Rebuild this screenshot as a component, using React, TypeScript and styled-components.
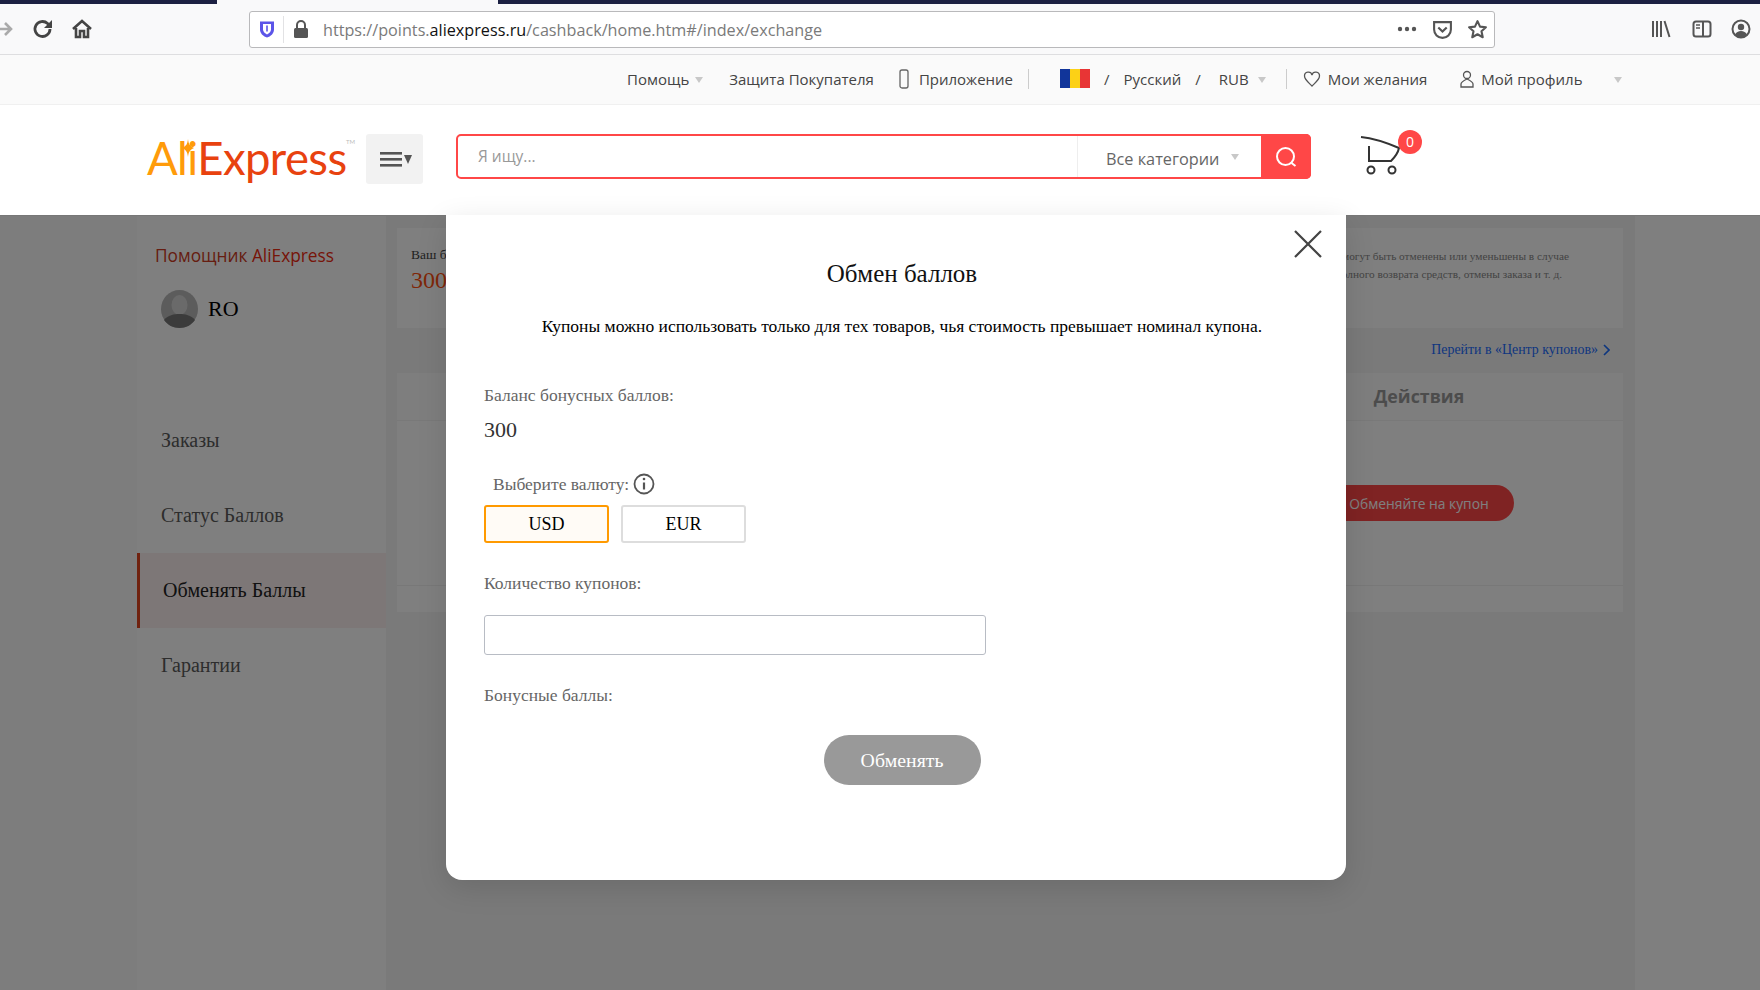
import React from "react";
import styled, { createGlobalStyle } from "styled-components";

const Global = createGlobalStyle`
  html, body { margin: 0; padding: 0; background: #fff; overflow: hidden; }
  * { box-sizing: border-box; }
`;
const sans = `"Open Sans", "Noto Sans", sans-serif`;
const serif = `"Liberation Serif", "Times New Roman", serif`;

const Screen = styled.div`
  position: relative; width: 1760px; height: 990px; overflow: hidden;
  display: flex; flex-direction: column; font-family: ${serif};
`;
const TabStrip = styled.div`
  height: 4px; flex: none; display: flex; background: #1c2042;
`;
const ActiveTab = styled.div`
  width: 281px; margin-left: 217px; background: #f9f9fa;
`;
const Toolbar = styled.div`
  height: 51px; flex: none; background: #f9f9fa; border-bottom: 1px solid #dedee0;
  display: flex; align-items: center; position: relative;
`;
const ToolIcon = styled.svg<{ $ml: number }>`
  flex: none; margin-left: ${p => p.$ml}px; display: block;
`;
const UrlBar = styled.div`
  width: 1246px; height: 37px; margin-left: 156px; padding-right: 6px;
  background: #fff; border: 1px solid #b9b9bb; border-radius: 3px;
  display: flex; align-items: center; flex: none;
`;
const UrlDivider = styled.div`
  width: 1px; height: 27px; background: #e2e2e4; margin-left: 8px;
`;
const UrlText = styled.div`
  font-family: ${sans}; font-size: 16.2px; color: #7a7a7a; margin-left: 14px; flex: 1;
  padding-top: 2px; white-space: nowrap;
  b { font-weight: 400; color: #111; }
`;
const TopNav = styled.div`
  height: 50px; flex: none; background: #fafafa; border-bottom: 1px solid #f0f0f0;
  display: flex; align-items: center; padding: 0 0 2px 627px;
  font-family: ${sans}; font-size: 15px; color: #444;
`;
const NavText = styled.span<{ $ml?: number }>`
  margin-left: ${p => p.$ml ?? 0}px; white-space: nowrap; flex: none;
`;
const Caret = styled.span<{ $ml: number; $up?: number }>`
  flex: none; margin-left: ${p => p.$ml}px; width: 0; height: 0; margin-top: ${p => 2 - (p.$up ?? 0)}px;
  border-left: 4.5px solid transparent; border-right: 4.5px solid transparent;
  border-top: 6px solid #c8c8c8;
`;
const NavDivider = styled.span<{ $ml: number }>`
  flex: none; margin-left: ${p => p.$ml}px; width: 1px; height: 20px; background: #ccc;
`;
const Flag = styled.div`
  flex: none; margin-left: 31px; width: 30px; height: 19px; display: flex;
`;
const FlagStripe = styled.span<{ $color: string }>`
  flex: 1; background: ${p => p.$color};
`;
const Header = styled.div`
  height: 110px; flex: none; background: #fff; display: flex; align-items: center;
  padding-left: 147px; position: relative;
`;
const Logo = styled.div`
  position: relative; width: 203px; height: 60px; flex: none;
  font-family: "Lato", ${sans}; font-size: 45.5px; line-height: 60px; letter-spacing: -0.6px;
  color: #e8420f; white-space: nowrap; font-weight: 400; margin-bottom: 4px;
  em { font-style: normal; color: #ff9b0a; }
  sup { position: absolute; left: 199px; top: 11px; font-size: 6px; line-height: 1; color: #bbb; letter-spacing: 0; }
`;
const LogoStar = styled.svg`
  position: absolute; left: 34px; top: 11px;
`;
const MenuBtn = styled.div`
  width: 57px; height: 50px; margin-left: 16px; margin-bottom: 2px; flex: none; background: #f2f2f2; border-radius: 3px;
  display: flex; align-items: center; justify-content: center;
`;
const SearchBox = styled.div`
  width: 855px; height: 45px; margin-left: 33px; margin-bottom: 7px; flex: none; border: 2px solid #ff4747; border-radius: 5px;
  display: flex; align-items: stretch; background: #fff; position: relative;
`;
const SearchInput = styled.div`
  width: 620px; font-family: ${sans}; font-size: 15.5px; color: #999;
  padding: 0 0 2px 20px; display: flex; align-items: center; border-right: 1px solid #eee;
`;
const CategoryCell = styled.div`
  width: 183px; display: flex; align-items: center; padding-left: 28px; padding-top: 4px;
  font-family: ${sans}; font-size: 16.3px; color: #666;
`;
const SearchBtn = styled.div`
  flex: 1; margin: -2px -2px -2px 0; background: #ff4747; border-radius: 0 5px 5px 0;
  display: flex; align-items: center; justify-content: center;
`;
const CartWrap = styled.div`
  position: relative; width: 44px; height: 42px; margin-left: 49px; margin-bottom: 9px; flex: none;
`;
const CartBadge = styled.div`
  position: absolute; left: 38px; top: -5px; width: 24px; height: 24px; border-radius: 50%;
  background: #ff4747; color: #fff; font-family: ${sans}; font-size: 14px;
  display: flex; align-items: center; justify-content: center;
`;
const Body = styled.div`
  flex: 1; display: flex; background: #fff; min-height: 0; border-top: 1px solid #eee;
`;
const Gutter = styled.div`
  width: 137px; flex: none; background: #fafafa;
`;
const Container = styled.div`
  width: 1498px; flex: none; background: #f5f5f5; display: flex;
`;
const Sidebar = styled.aside`
  width: 249px; flex: none; background: #fff; display: flex; flex-direction: column;
`;
const HelperTitle = styled.div`
  margin: 28px 0 0 18px; font-family: ${sans}; font-size: 17.3px; color: #cc3a22; white-space: nowrap;
  height: 24px; line-height: 24px;
  span { color: #ee2a10; }
`;
const UserRow = styled.div`
  display: flex; align-items: center; gap: 10px; margin: 22px 0 0 24px; height: 38px;
  font-size: 22px; color: #000;
`;
const MenuList = styled.div`
  margin-top: 75px; display: flex; flex-direction: column;
`;
const MenuItem = styled.div<{ $active?: boolean }>`
  height: 75px; display: flex; align-items: center; font-size: 20px;
  padding-left: ${p => (p.$active ? 23 : 24)}px;
  color: ${p => (p.$active ? "#222" : "#5a5a5a")};
  background: ${p => (p.$active ? "#fbeeee" : "transparent")};
  border-left: ${p => (p.$active ? "3px solid #e0441f" : "none")};
`;
const Content = styled.main`
  width: 1226px; margin-left: 11px; flex: none; display: flex; flex-direction: column;
`;
const InfoPanel = styled.section`
  margin-top: 12px; height: 100px; background: #fff; padding: 17px 0 0 14px; display: flex; justify-content: space-between;
`;
const Balance = styled.div`
  font-size: 13.5px; color: #444; line-height: 20px;
`;
const BalanceValue = styled.div`
  font-size: 24px; color: #ff4f10; line-height: 28px; margin-top: 1px;
`;
const Notice = styled.div`
  display: flex; flex-direction: column; align-items: flex-end; padding-right: 54px;
  font-size: 11.3px; color: #888; line-height: 18px; padding-top: 2px;
`;
const NoticeLine = styled.span<{ $inset?: number }>`
  margin-right: ${p => p.$inset ?? 0}px; white-space: nowrap;
`;
const LinkRow = styled.div`
  height: 45px; display: flex; align-items: center; justify-content: flex-end; padding: 0 13px 2px 0; gap: 5px;
  font-size: 13.9px; color: #1a6cff;
`;
const TablePanel = styled.section`
  height: 239px; background: #fff; display: flex; flex-direction: column;
`;
const TableHead = styled.div`
  height: 48px; flex: none; border-bottom: 1px solid #f3f3f3; background: #fdfdfd; display: flex; align-items: center; justify-content: flex-end; padding-bottom: 2px;
`;
const ActionCol = styled.div`
  width: 408px; text-align: center; font-family: ${sans}; font-size: 17.8px; font-weight: 700; color: #999;
`;
const TableRow = styled.div`
  height: 165px; flex: none; border-bottom: 1px solid #f0f0f0; display: flex; justify-content: flex-end; align-items: center;
`;
const ActionCell = styled.div`
  width: 408px; display: flex; justify-content: center;
`;
const RedBtn = styled.div`
  width: 190px; height: 36px; border-radius: 18px; background: #ff4747; color: #fff;
  font-family: ${sans}; font-size: 13.8px; display: flex; align-items: center; justify-content: center;
`;
const Overlay = styled.div`
  position: absolute; left: 0; right: 0; top: 215px; bottom: 0; background: rgba(0,0,0,.5);
`;
const Modal = styled.div`
  position: absolute; left: 446px; top: 215px; width: 900px; height: 665px; background: #fff;
  border-radius: 0 0 16px 16px; box-shadow: 0 8px 30px rgba(0,0,0,.12);
  padding: 0 26px 0 38px; display: flex; flex-direction: column;
`;
const CloseBtn = styled.svg`
  position: absolute; left: 848px; top: 15px;
`;
const Title = styled.h2`
  margin: 43px 0 0; font-size: 25px; font-weight: 400; color: #111; text-align: center; line-height: 32px;
`;
const Lead = styled.p`
  margin: 24px 0 0; font-size: 17.5px; color: #000; text-align: center; line-height: 24px;
`;
const FieldLabel = styled.div<{ $mt: number; $ml?: number }>`
  margin: ${p => p.$mt}px 0 0 ${p => p.$ml ?? 0}px; font-size: 17.5px; color: #666; line-height: 24px;
  display: flex; align-items: center; gap: 4px;
`;
const Amount = styled.div`
  margin-top: 9px; font-size: 22px; color: #333; line-height: 28px;
`;
const CurrencyRow = styled.div`
  display: flex; gap: 12px; margin-top: 9px;
`;
const CurrencyBtn = styled.div<{ $active?: boolean }>`
  width: 125px; height: 38px; border-radius: 3px;
  border: 2px solid ${p => (p.$active ? "#ff9a00" : "#ddd")};
  background: ${p => (p.$active ? "#fffbf6" : "#fff")};
  display: flex; align-items: center; justify-content: center; font-size: 18px; color: #000;
`;
const CountInput = styled.div`
  width: 502px; height: 40px; margin-top: 20px; border: 1px solid #b8bcc4; border-radius: 3px; background: #fff;
`;
const SubmitRow = styled.div`
  display: flex; justify-content: center; margin-top: 28px;
`;
const Submit = styled.div`
  width: 157px; height: 50px; border-radius: 25px; background: #999; color: #fff;
  display: flex; align-items: center; justify-content: center; font-size: 19.8px;
`;

export default function App() {
  return (
    <>
      <Global />
      <Screen>
        <TabStrip><ActiveTab /></TabStrip>
        <Toolbar>
          <ToolIcon $ml={0} width="13" height="20" viewBox="0 0 13 20" fill="none" stroke="#aaa" strokeWidth="2.600">
            <path d="M-1 10h12M5 4l6 6-6 6" />
          </ToolIcon>
          <ToolIcon $ml={19} width="22" height="22" viewBox="0 0 22 22" fill="none" stroke="#444" strokeWidth="2.800">
            <path d="M18 11a7.500 7.500 0 1 1-2.400-5.500L18 8" /><path d="M20 2v8h-8z" fill="#444" stroke="none" />
          </ToolIcon>
          <ToolIcon $ml={17} width="22" height="22" viewBox="0 0 22 22" fill="none" stroke="#444" strokeWidth="2.600">
            <path d="M2 11 11 3l9 8" /><path d="M5 10v9h4v-6h4v6h4v-9" />
          </ToolIcon>
          <UrlBar>
            <ToolIcon $ml={9} width="16" height="20" viewBox="0 0 16 20">
              <path d="M1 2.500h14v8c0 4-3.500 7-7 8-3.500-1-7-4-7-8z" fill="#5b54e8" />
              <path d="M4 5h8v5.500c0 2-2 4-4 5-2-1-4-3-4-5z" fill="#fff" />
              <path d="M7.200 6.500h1.600v6h-1.600z" fill="#5b54e8" />
            </ToolIcon>
            <UrlDivider />
            <ToolIcon $ml={9} width="16" height="20" viewBox="0 0 16 20">
              <path d="M4 9V6a4 4 0 0 1 8 0v3" fill="none" stroke="#555" strokeWidth="2" /><rect x="1" y="9" width="14" height="10" rx="1.500" fill="#555" />
            </ToolIcon>
            <UrlText>https://points.<b>aliexpress.ru</b>/cashback/home.htm#/index/exchange</UrlText>
            <ToolIcon $ml={0} width="20" height="6" viewBox="0 0 20 6" fill="#555">
              <circle cx="3" cy="3" r="2.200" /><circle cx="10" cy="3" r="2.200" /><circle cx="17" cy="3" r="2.200" />
            </ToolIcon>
            <ToolIcon $ml={15} width="21" height="21" viewBox="0 0 20 20" fill="none" stroke="#555" strokeWidth="2">
              <path d="M2 3h16v7a8 8 0 0 1-16 0z" /><path d="M6 8l4 4 4-4" />
            </ToolIcon>
            <ToolIcon $ml={14} width="21" height="21" viewBox="0 0 20 20" fill="none" stroke="#555" strokeWidth="2" strokeLinejoin="round">
              <path d="M10 2l2.400 5.300 5.600.6-4.200 3.800 1.200 5.700L10 14.500l-5 2.900 1.200-5.700L2 7.900l5.600-.6z" />
            </ToolIcon>
          </UrlBar>
          <ToolIcon $ml={156} width="20" height="20" viewBox="0 0 20 20" stroke="#555" strokeWidth="2" fill="none">
            <path d="M2 2v16M6 2v16M10 2v16M13.500 2l5 16" />
          </ToolIcon>
          <ToolIcon $ml={21} width="20" height="20" viewBox="0 0 20 20" fill="none" stroke="#555" strokeWidth="2">
            <rect x="1.500" y="2.500" width="17" height="15" rx="2.500" /><path d="M11 2.500v15" /><path d="M4 6h4M4 9h4" strokeWidth="1.500" />
          </ToolIcon>
          <ToolIcon $ml={19} width="20" height="20" viewBox="0 0 20 20" fill="none" stroke="#555" strokeWidth="2">
            <circle cx="10" cy="10" r="8.500" /><circle cx="10" cy="8" r="3.200" fill="#555" stroke="none" /><path d="M4 16c1-3 3.500-4 6-4s5 1 6 4l-3 2H7z" fill="#555" stroke="none" />
          </ToolIcon>
        </Toolbar>
        <TopNav>
          <NavText>Помощь</NavText>
          <Caret $ml={6} />
          <NavText $ml={26}>Защита Покупателя</NavText>
          <ToolIcon $ml={24} width="12" height="20" viewBox="0 0 12 20" fill="none" stroke="#666" strokeWidth="1.300">
            <path d="M2 3a2 2 0 0 1 2-2h4a2 2 0 0 1 2 2v14a2 2 0 0 1-2 2H4a2 2 0 0 1-2-2z" />
          </ToolIcon>
          <NavText $ml={9}>Приложение</NavText>
          <NavDivider $ml={15} />
          <Flag>
            <FlagStripe $color="#11359a" /><FlagStripe $color="#fcd116" /><FlagStripe $color="#e83535" />
          </Flag>
          <NavText $ml={14}>/</NavText>
          <NavText $ml={14}>Русский</NavText>
          <NavText $ml={14}>/</NavText>
          <NavText $ml={18}>RUB</NavText>
          <Caret $ml={9} />
          <NavDivider $ml={20} />
          <ToolIcon $ml={16} width="18" height="18" viewBox="0 0 18 18" fill="none" stroke="#555" strokeWidth="1.300">
            <path d="M9 16C5 12 1.500 9.500 1.500 6A3.800 3.800 0 0 1 9 5a3.800 3.800 0 0 1 7.500 1c0 3.500-3.500 6-7.500 10z" />
          </ToolIcon>
          <NavText $ml={7}>Мои желания</NavText>
          <ToolIcon $ml={32} width="16" height="18" viewBox="0 0 16 18" fill="none" stroke="#555" strokeWidth="1.300">
            <circle cx="8" cy="5" r="3.500" /><path d="M2 17v-3c0-2 2-3 6-5 4 2 6 3 6 5v3z" />
          </ToolIcon>
          <NavText $ml={6}>Мой профиль</NavText>
          <Caret $ml={32} />
        </TopNav>
        <Header>
          <Logo>
            <em>Ali</em>Express<sup>TM</sup>
            <LogoStar width="14" height="18" viewBox="0 0 14 18"><path d="M7 0c.6 5 1.600 7 6 9-4.400 2-5.400 4-6 9-.6-5-1.600-7-6-9 4.400-2 5.400-4 6-9z" fill="#ff9b0a" /></LogoStar>
          </Logo>
          <MenuBtn>
            <svg width="36" height="20" viewBox="0 0 36 20" fill="#555">
              <rect x="3" y="3" width="22" height="2.600" /><rect x="3" y="9" width="22" height="2.600" /><rect x="3" y="15" width="22" height="2.600" />
              <path d="M27 6h8l-4 9z" />
            </svg>
          </MenuBtn>
          <SearchBox>
            <SearchInput>Я ищу...</SearchInput>
            <CategoryCell>Все категории<Caret $ml={12} $up={6} /></CategoryCell>
            <SearchBtn>
              <svg width="24" height="24" viewBox="0 0 24 24" fill="none" stroke="#fff" strokeWidth="2">
                <circle cx="11.500" cy="11.500" r="8.500" /><path d="M17.500 18l4 3" />
              </svg>
            </SearchBtn>
          </SearchBox>
          <CartWrap>
            <svg width="44" height="42" viewBox="0 0 44 42" fill="none" stroke="#333" strokeWidth="2">
              <path d="M1 2c10 1 24 5 38 11-1 5-4 9-8 13H9v-15" /><circle cx="11" cy="35" r="3.500" /><circle cx="32" cy="35" r="3.500" />
            </svg>
            <CartBadge>0</CartBadge>
          </CartWrap>
        </Header>
        <Body>
          <Gutter />
          <Container>
            <Sidebar>
              <HelperTitle>Помощник <span>AliExpress</span></HelperTitle>
              <UserRow>
                <svg width="37" height="38" viewBox="0 0 37 38">
                  <ellipse cx="18.500" cy="19" rx="18.500" ry="19" fill="#b8b8b8" />
                  <ellipse cx="18.500" cy="15" rx="8" ry="10" fill="#d5d5d5" />
                  <path d="M3 30c4-5 10-6 15.500-6S30 25 34 30c-3.500 5-9 8-15.500 8S6.500 35 3 30z" fill="#777" />
                </svg>
                RO
              </UserRow>
              <MenuList>
                <MenuItem>Заказы</MenuItem>
                <MenuItem>Статус Баллов</MenuItem>
                <MenuItem $active>Обменять Баллы</MenuItem>
                <MenuItem>Гарантии</MenuItem>
              </MenuList>
            </Sidebar>
            <Content>
              <InfoPanel>
                <Balance>Ваш баланс<BalanceValue>300</BalanceValue></Balance>
                <Notice>
                  <NoticeLine>Баллы могут быть отменены или уменьшены в случае</NoticeLine>
                  <NoticeLine $inset={7}>частичного или полного возврата средств, отмены заказа и т. д.</NoticeLine>
                </Notice>
              </InfoPanel>
              <LinkRow>
                Перейти в «Центр купонов»
                <svg width="7" height="12" viewBox="0 0 7 12" fill="none" stroke="#1a6cff" strokeWidth="1.600"><path d="M1 1l5 5-5 5" /></svg>
              </LinkRow>
              <TablePanel>
                <TableHead><ActionCol>Действия</ActionCol></TableHead>
                <TableRow><ActionCell><RedBtn>Обменяйте на купон</RedBtn></ActionCell></TableRow>
              </TablePanel>
            </Content>
          </Container>
        </Body>
        <Overlay />
        <Modal>
          <CloseBtn width="28" height="28" viewBox="0 0 28 28" fill="none" stroke="#444" strokeWidth="2.200">
            <path d="M1 1l26 26M27 1L1 27" />
          </CloseBtn>
          <Title>Обмен баллов</Title>
          <Lead>Купоны можно использовать только для тех товаров, чья стоимость превышает номинал купона.</Lead>
          <FieldLabel $mt={45}>Баланс бонусных баллов:</FieldLabel>
          <Amount>300</Amount>
          <FieldLabel $mt={28} $ml={9}>
            Выберите валюту:
            <svg width="22" height="22" viewBox="0 0 22 22" fill="none" stroke="#555" strokeWidth="1.800">
              <circle cx="11" cy="11" r="9.500" /><path d="M11 9.500v7" strokeWidth="2.200" /><circle cx="11" cy="6" r="1.300" fill="#555" stroke="none" />
            </svg>
          </FieldLabel>
          <CurrencyRow>
            <CurrencyBtn $active>USD</CurrencyBtn>
            <CurrencyBtn>EUR</CurrencyBtn>
          </CurrencyRow>
          <FieldLabel $mt={28}>Количество купонов:</FieldLabel>
          <CountInput />
          <FieldLabel $mt={28}>Бонусные баллы:</FieldLabel>
          <SubmitRow><Submit>Обменять</Submit></SubmitRow>
        </Modal>
      </Screen>
    </>
  );
}
